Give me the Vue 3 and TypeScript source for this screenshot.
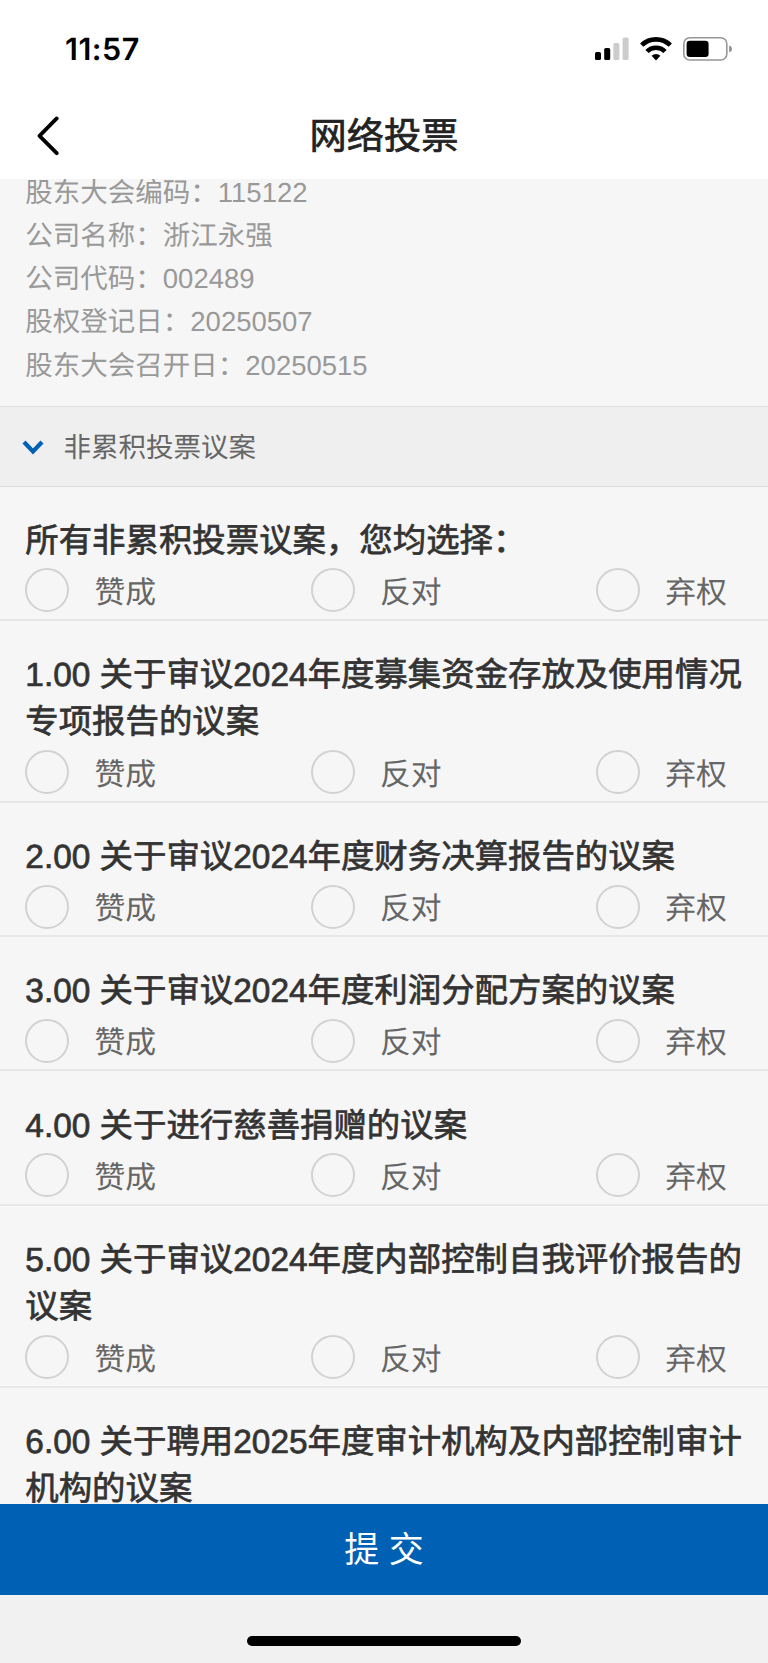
<script setup lang="ts">
import { ref } from 'vue'

interface InfoRow {
  label: string
  value: string
}

interface Proposal {
  id: string
  lines: string[]
}

const info: InfoRow[] = [
  { label: '股东大会编码', value: '115122' },
  { label: '公司名称', value: '浙江永强' },
  { label: '公司代码', value: '002489' },
  { label: '股权登记日', value: '20250507' },
  { label: '股东大会召开日', value: '20250515' },
]

const proposals: Proposal[] = [
  { id: 'all', lines: ['所有非累积投票议案，您均选择：'] },
  { id: '1', lines: ['1.00 关于审议2024年度募集资金存放及使用情况', '专项报告的议案'] },
  { id: '2', lines: ['2.00 关于审议2024年度财务决算报告的议案'] },
  { id: '3', lines: ['3.00 关于审议2024年度利润分配方案的议案'] },
  { id: '4', lines: ['4.00 关于进行慈善捐赠的议案'] },
  { id: '5', lines: ['5.00 关于审议2024年度内部控制自我评价报告的', '议案'] },
  { id: '6', lines: ['6.00 关于聘用2025年度审计机构及内部控制审计', '机构的议案'] },
]

const options: string[] = ['赞成', '反对', '弃权']
const votes = ref<Record<string, string>>({})

function vote(id: string, option: string): void {
  votes.value[id] = option
}
</script>

<template>
  <div class="screen">
    <header class="top">
      <div class="status">
        <span class="time">11:57</span>
        <div class="indicators">
          <svg class="signal" viewBox="0 0 34 24">
            <rect x="0" y="15" width="6" height="8" rx="1.6" fill="#000" />
            <rect x="9.2" y="11" width="6" height="12" rx="1.6" fill="#000" />
            <rect x="18.4" y="6" width="6" height="17" rx="1.6" fill="#ccc" />
            <rect x="27.6" y="0.6" width="6" height="22.4" rx="1.6" fill="#ccc" />
          </svg>
          <svg class="wifi" viewBox="0 0 32 24">
            <g fill="none" stroke="#000" stroke-width="4.6">
              <path d="M1.7 8.1 A20.6 20.6 0 0 1 30.3 8.1" />
              <path d="M7 14.5 A12.6 12.6 0 0 1 25 14.5" />
            </g>
            <path d="M11.6 18.8 A6.3 6.3 0 0 1 20.4 18.8 L16.5 22.9 Q16 23.4 15.5 22.9 Z" fill="#000" />
          </svg>
          <svg class="battery" viewBox="0 0 50 24">
            <rect x="0.8" y="0.8" width="43" height="22.2" rx="6" fill="none" stroke="#979797" stroke-width="1.6" />
            <rect x="3.6" y="3.7" width="22" height="16.3" rx="3.2" fill="#000" />
            <path d="M46.2 8.4 Q49 9.3 49 12 Q49 14.7 46.2 15.6 Z" fill="#8c8c8c" />
          </svg>
        </div>
      </div>
      <nav class="nav">
        <svg class="back" viewBox="0 0 24 40">
          <path d="M20.7 2.4 L3.5 19.8 L20.7 37.2" fill="none" stroke="#000" stroke-width="3.8" stroke-linecap="round" stroke-linejoin="round" />
        </svg>
        <h1 class="title">网络投票</h1>
      </nav>
    </header>

    <main class="content">
      <section class="info">
        <p v-for="row in info" :key="row.label" class="info-row">{{ row.label }}：{{ row.value }}</p>
      </section>

      <div class="group">
        <svg class="chevron" viewBox="0 0 22 16">
          <path d="M2 2 L11 11.4 L20 2" fill="none" stroke="#0061b4" stroke-width="4.2" />
        </svg>
        <span class="group-name">非累积投票议案</span>
      </div>

      <section v-for="p in proposals" :key="p.id" class="item">
        <h2 class="question">
          <span v-for="line in p.lines" :key="line" class="line">{{ line }}</span>
        </h2>
        <div class="options">
          <div v-for="o in options" :key="o" class="option" @click="vote(p.id, o)">
            <span class="radio" :class="{ checked: votes[p.id] === o }"></span>
            <span class="label">{{ o }}</span>
          </div>
        </div>
      </section>
    </main>

    <button class="submit" type="button">提 交</button>
    <footer class="home"><span class="home-bar"></span></footer>
  </div>
</template>

<style>
body {
  margin: 0;
}
</style>

<style scoped>
.screen {
  display: flex;
  flex-direction: column;
  width: 768px;
  height: 1663px;
  overflow: hidden;
  background: #f6f6f6;
  font-family: 'Liberation Sans', 'Noto Sans CJK SC', sans-serif;
  text-rendering: geometricPrecision;
}

.top {
  flex: none;
  height: 179px;
  background: #fff;
}

.status {
  display: flex;
  justify-content: space-between;
  align-items: center;
  height: 98px;
  padding: 0 35.5px 0 65px;
}

.time {
  margin-top: 2px;
  font: 600 30.5px/36px Inter, sans-serif;
  letter-spacing: 0.5px;
  color: #000;
}

.indicators {
  display: flex;
  align-items: center;
}

.signal {
  width: 34px;
  height: 24px;
}

.wifi {
  width: 32px;
  height: 24px;
  margin-left: 11px;
}

.battery {
  width: 50px;
  height: 24px;
  margin-left: 11px;
}

.nav {
  display: grid;
  grid-template-columns: 100px 1fr 100px;
  align-items: center;
  height: 76px;
}

.back {
  width: 24px;
  height: 40px;
  margin-left: 36px;
}

.title {
  margin: 0;
  text-align: center;
  font-size: 37.2px;
  line-height: 48px;
  font-weight: 400;
  color: #222;
  -webkit-text-stroke: 0.7px #222;
}

.content {
  flex: none;
  height: 1325.3px;
  overflow: hidden;
}

.info {
  box-sizing: border-box;
  height: 236px;
  margin-top: -9px;
  padding: 0.6px 25.3px 0;
}

.info-row {
  margin: 0;
  font-size: 27.5px;
  line-height: 43.3px;
  color: #999;
}

.group {
  box-sizing: border-box;
  display: flex;
  align-items: center;
  height: 80.5px;
  padding: 3px 0 0 21.8px;
  background: #efefef;
  border-top: 1px solid #e0e0e0;
  border-bottom: 1px solid #dcdcdc;
}

.chevron {
  width: 22px;
  height: 16px;
}

.group-name {
  margin-left: 19.7px;
  font-size: 27.5px;
  line-height: 40px;
  color: #666;
}

.item {
  box-sizing: border-box;
  padding: 31.2px 0 6.5px 25.3px;
  border-bottom: 2px solid #e7e7e7;
}

.question {
  margin: 0;
  font-size: 33.42px;
  line-height: 47.4px;
  font-weight: 400;
  color: #333;
  -webkit-text-stroke: 0.7px #333;
}

.line {
  display: block;
  white-space: nowrap;
}

.options {
  display: grid;
  grid-template-columns: repeat(3, 285.4px);
  padding-top: 3.3px;
}

.option {
  display: flex;
  align-items: center;
  height: 44px;
}

.radio {
  box-sizing: border-box;
  width: 44px;
  height: 44px;
  border: 2px solid #d2d2d2;
  border-radius: 50%;
}

.radio.checked {
  border: 13px solid #0061b4;
}

.label {
  margin: 5px 0 0 25.2px;
  font-size: 30.8px;
  line-height: 40px;
  color: #666;
}

.submit {
  flex: none;
  height: 90.4px;
  padding: 2px 0 0;
  border: 0;
  background: #0061b4;
  color: #fff;
  font-family: inherit;
  font-size: 35px;
  line-height: 88px;
}

.home {
  display: flex;
  flex: 1;
  justify-content: center;
  align-items: flex-end;
  background: #f1f1f1;
}

.home-bar {
  width: 273.5px;
  height: 10px;
  margin-bottom: 17px;
  border-radius: 5px;
  background: #000;
}
</style>
